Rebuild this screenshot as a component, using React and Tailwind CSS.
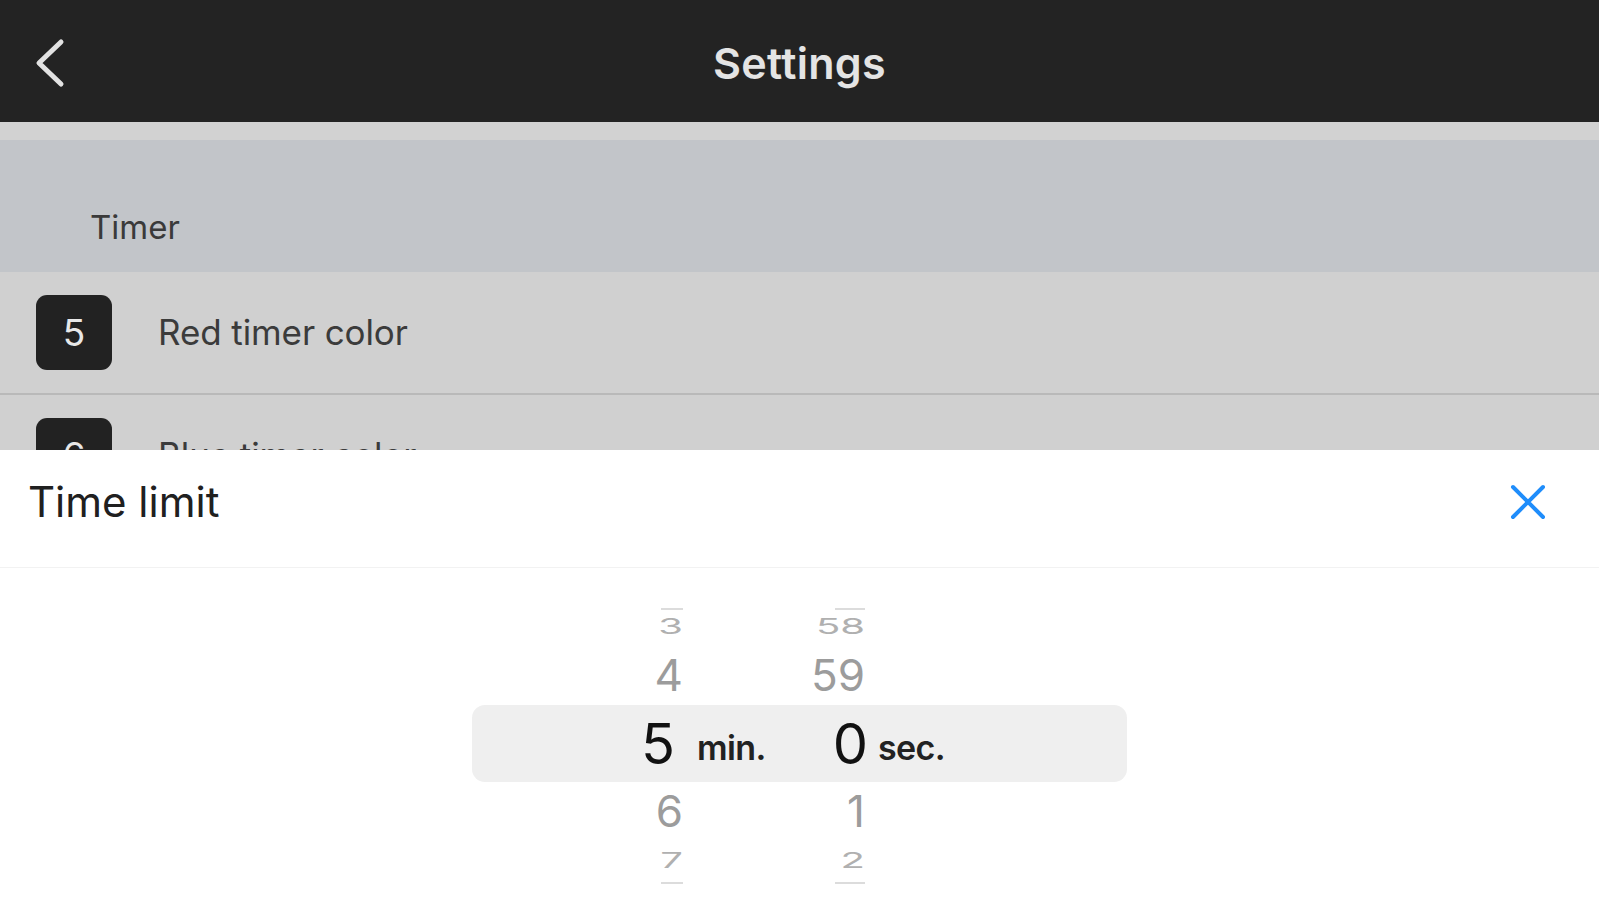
import React from "react";

const font = { fontFamily: "Inter, 'Liberation Sans', sans-serif" };

const BackIcon = () => (
  <svg width="34" height="50" viewBox="0 0 34 50" className="ml-[33px] mt-[4px]">
    <polyline
      points="28,4 6,25 28,46"
      fill="none"
      stroke="#e2e2e2"
      strokeWidth="5"
      strokeLinecap="round"
      strokeLinejoin="round"
    />
  </svg>
);

const CloseIcon = () => (
  <svg width="36" height="36" viewBox="0 0 36 36">
    <path
      d="M3 3 L33 33 M33 3 L3 33"
      stroke="#1f8dfb"
      strokeWidth="4"
      strokeLinecap="round"
    />
  </svg>
);

const SettingRow = ({ num, label }) => (
  <div className="flex items-center h-[123px] bg-[#d0d0d0] border-b-2 border-[#b9b9b9]">
    <div className="ml-[36px] w-[76px] h-[75px] rounded-[11px] bg-[#222222] flex items-center justify-center text-[37px] text-[#e8e8e8]">
      {num}
    </div>
    <span className="ml-[46px] text-[35px] text-[#3b3b3b] tracking-[-0.1px]">
      {label}
    </span>
  </div>
);

const PickerRow = ({ min, sec, height, size, color, squash, dash }) => (
  <div
    className="w-[655px] mx-auto pl-[127px] flex items-center"
    style={{ height }}
  >
    <div
      className="w-[84px] text-right leading-none"
      style={{ fontSize: size, color, transform: `scaleY(${squash})` }}
    >
      {dash ? <span className="inline-block w-[22px] h-[2px] bg-[#dcdcdc] align-middle" /> : min}
    </div>
    <div className="w-[102px]" />
    <div
      className="w-[80px] text-right leading-none"
      style={{ fontSize: size, color, transform: `scaleY(${squash})` }}
    >
      {dash ? <span className="inline-block w-[30px] h-[2px] bg-[#dcdcdc] align-middle" /> : sec}
    </div>
  </div>
);

export default function App() {
  return (
    <div className="w-[1599px] h-[900px] overflow-hidden bg-white flex flex-col" style={font}>
      {/* top bar */}
      <div className="h-[122px] bg-[#232323] flex items-center relative shrink-0">
        <BackIcon />
        <div className="absolute inset-x-0 top-0 h-[122px] flex items-center justify-center pt-[4px] pointer-events-none">
          <span className="text-[43px] font-semibold text-[#e4e4e4] tracking-[0.3px]">
            Settings
          </span>
        </div>
      </div>

      {/* list behind the sheet */}
      <div className="h-[328px] overflow-hidden shrink-0">
        <div className="h-[18px] bg-[#d2d2d2]" />
        <div className="h-[132px] bg-[#c2c5c9] flex items-end pb-[20px]">
          <span className="ml-[90px] text-[33px] text-[#3a3a3a]">Timer</span>
        </div>
        <SettingRow num="5" label="Red timer color" />
        <SettingRow num="6" label="Blue timer color" />
      </div>

      {/* bottom sheet */}
      <div className="flex-1 bg-white flex flex-col">
        <div className="h-[118px] flex items-center justify-between pb-[14px] border-b border-[#f2f2f2]">
          <span className="ml-[28px] text-[42px] text-[#202020]">Time limit</span>
          <div className="mr-[53px]">
            <CloseIcon />
          </div>
        </div>

        <div className="flex flex-col pt-[32px]">
          <PickerRow dash height={12} size={40} color="#c0c0c0" squash={1} />
          <PickerRow min="3" sec="58" height={28} size={40} color="#b0b0b0" squash={0.55} />
          <div className="h-[8px]" />
          <PickerRow min="4" sec="59" height={54} size={44} color="#9c9c9c" squash={1} />
          <div className="h-[3px]" />
          <div className="w-[655px] h-[77px] mx-auto pl-[127px] rounded-[13px] bg-[#efefef] flex items-center">
            <div className="w-[76px] text-right text-[56px] leading-none text-[#111111]">5</div>
            <div className="w-[113px] pl-[22px] text-[34px] font-semibold text-[#222222] pt-[8px] tracking-[-0.6px]">
              min.
            </div>
            <div className="w-[80px] text-right text-[56px] leading-none text-[#111111]">0</div>
            <div className="pl-[10px] text-[34px] font-semibold text-[#222222] pt-[8px] tracking-[-0.6px]">
              sec.
            </div>
          </div>
          <div className="h-[2px]" />
          <PickerRow min="6" sec="1" height={54} size={44} color="#9c9c9c" squash={1} />
          <div className="h-[8px]" />
          <PickerRow min="7" sec="2" height={28} size={40} color="#b0b0b0" squash={0.55} />
          <PickerRow dash height={12} size={40} color="#c0c0c0" squash={1} />
        </div>
      </div>
    </div>
  );
}
